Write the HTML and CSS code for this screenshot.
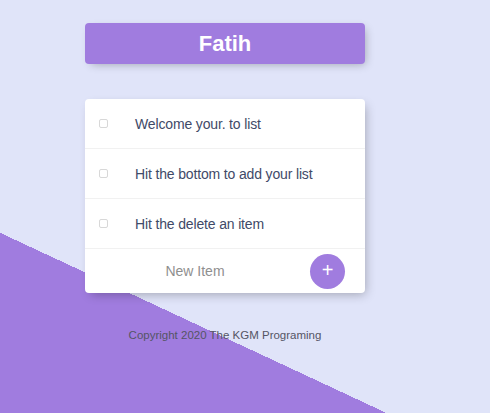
FILE: index.html
```html
<!DOCTYPE html>
<html lang="en">
<head>
<meta charset="utf-8">
<title>Fatih</title>
<link rel="stylesheet" href="styles.css">
</head>
<body>
<div class="page">
  <div class="heading"><h1>Fatih</h1></div>
  <div class="box">
    <div class="item"><input type="checkbox"><p>Welcome your. to list</p></div>
    <div class="item"><input type="checkbox"><p>Hit the bottom to add your list</p></div>
    <div class="item"><input type="checkbox"><p>Hit the delete an item</p></div>
    <form class="item-form">
      <input type="text" placeholder="New Item" class="new-item">
      <button type="button" class="add">+</button>
    </form>
  </div>
  <footer class="footer">Copyright 2020 The KGM Programing</footer>
</div>
</body>
</html>
```
FILE: styles.css
```css
html {
  overflow: hidden;
  margin: 0;
  height: 100%;
}
body {
  margin: 0;
  height: 100%;
  background-color: #e0e4f9;
  background-image: linear-gradient(25deg, #a07cdf 50%, #e0e4f9 50%);
  background-size: 490px 700px;
  background-position: 0 -3px;
  background-repeat: no-repeat;
  font-family: "Liberation Sans", Arial, sans-serif;
}
.page {
  width: 280px;
  margin-left: 85px;
  padding-top: 23px;
}
.heading {
  background: #a07cdf;
  border-radius: 4px;
  box-shadow: 3px 3px 10px -3px rgba(0, 0, 0, 0.3);
  height: 41px;
  display: flex;
  align-items: center;
  justify-content: center;
}
.heading h1 {
  margin: 0;
  color: #fff;
  font-size: 22px;
  font-weight: bold;
}
.box {
  margin-top: 35px;
  background: #fff;
  border-radius: 4px;
  box-shadow: 3px 4px 11px -3px rgba(0, 0, 0, 0.3);
}
.item {
  display: flex;
  align-items: center;
  height: 49px;
  border-bottom: 1px solid #f1f1f1;
}
.item input {
  appearance: none;
  width: 9px;
  height: 9px;
  margin: 0 0 0 14px;
  border: 1px solid #d8d8d8;
  border-radius: 2px;
  background: #fff;
}
.item p {
  margin: 0 0 0 27px;
  font-size: 14px;
  color: #3f4a68;
  letter-spacing: -0.15px;
}
.item-form {
  display: flex;
  align-items: center;
  height: 44px;
  padding-left: 14px;
  padding-right: 20px;
  justify-content: space-between;
}
.new-item {
  width: 192px;
  border: none;
  outline: none;
  text-align: center;
  font-family: "Liberation Sans", Arial, sans-serif;
  font-size: 14px;
  padding: 0;
  background: transparent;
}
.new-item::placeholder {
  color: #8f8f8f;
}
.add {
  width: 35px;
  height: 35px;
  border-radius: 50%;
  border: none;
  background: #a07cdf;
  color: #fff;
  font-size: 20px;
  line-height: 1;
  padding: 0 0 3px;
  font-family: "Liberation Sans", Arial, sans-serif;
}
.footer {
  margin-top: 36px;
  text-align: center;
  font-size: 11.5px;
  color: #555565;
}
```
